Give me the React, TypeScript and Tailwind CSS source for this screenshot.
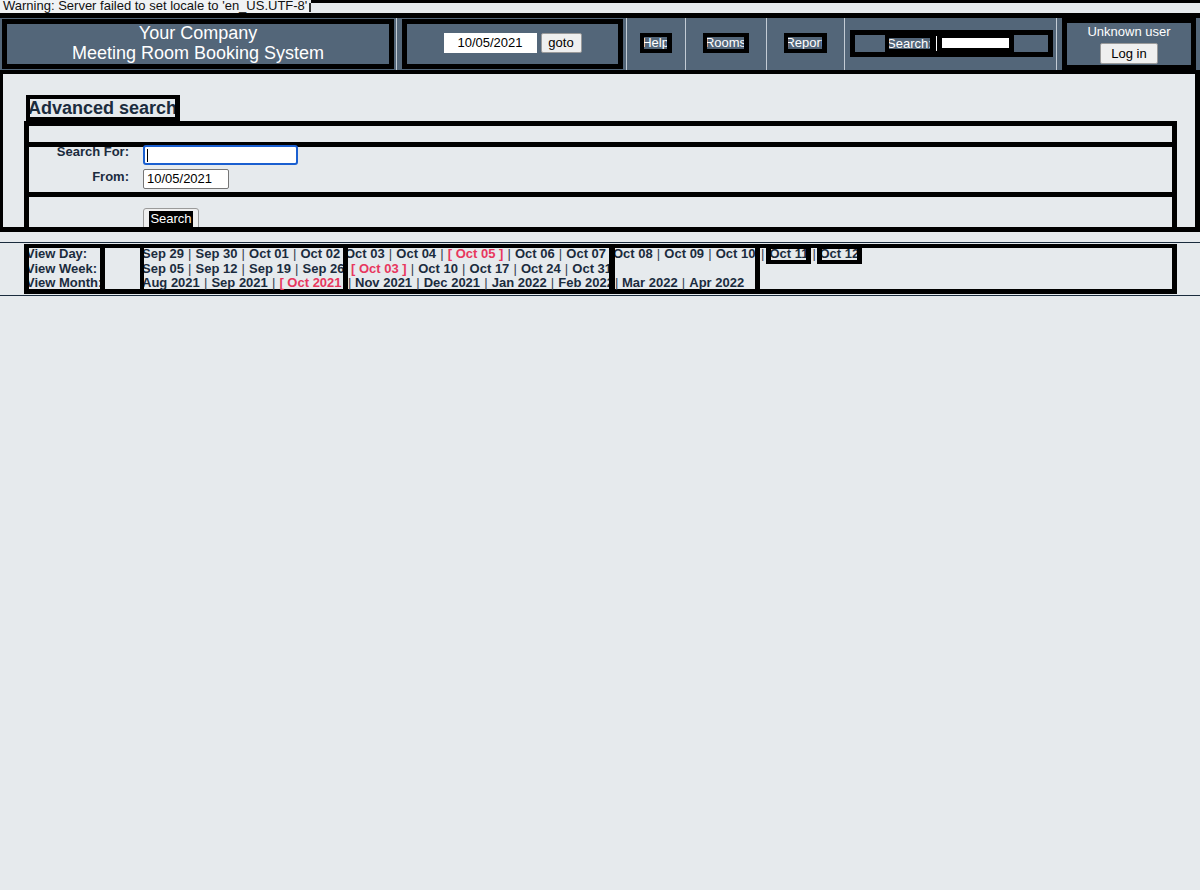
import React from "react";

// parts of a date row; entries in [ ] are the current period
function NavLine({ items, lead = false, className = "" }: { items: string[]; lead?: boolean; className?: string }) {
  return (
    <div className={`h-[14.5px] whitespace-nowrap leading-[14.5px] ${className}`}>
      {lead && <span className="font-normal text-[#34414f]"> | </span>}
      {items.map((it, i) => (
        <React.Fragment key={i}>
          {i > 0 && <span className="px-[0.5px] font-normal text-[#34414f]"> | </span>}
          <span className={it.startsWith("[") ? "text-[#e8375e]" : ""}>{it}</span>
        </React.Fragment>
      ))}
    </div>
  );
}

function HeaderLink({ label, cell, clip }: { label: string; cell: string; clip: string }) {
  return (
    <div className={`flex shrink-0 items-center justify-center border-r border-[#c3ccd5] pb-[3px] ${cell}`}>
      <span className="flex h-[20px] items-center bg-black pl-[4px] pr-[5px]">
        <span className={`flex h-[12px] items-center justify-center overflow-hidden whitespace-nowrap bg-[#536679] text-[13px] leading-[15px] text-white ${clip}`}>
          <span>{label}</span>
        </span>
      </span>
    </div>
  );
}

function DayBox({ label }: { label: string }) {
  return (
    <span className="-mt-[3px] flex h-[20px] w-[45px] shrink-0 items-start border-[5px] border-black bg-black">
      <span className="flex h-[11px] w-full items-center justify-center overflow-hidden whitespace-nowrap bg-[#e6eaed]">
        <span>{label}</span>
      </span>
    </span>
  );
}

export default function App() {
  return (
    <div className="min-h-[890px] bg-[#e6eaed] font-['Liberation_Sans',Arial,sans-serif] text-[#1b2c3e]">
      {/* warning strip */}
      <div className="flex h-[13px]">
        <span className="h-[13px] overflow-hidden whitespace-nowrap bg-[#f0f2f4] pl-[3px] pr-[2px] text-[13px] leading-[12px] text-[#111]">
          Warning: Server failed to set locale to 'en_US.UTF-8'
        </span>
        <span className="mt-[3px] h-[9px] w-[2px] bg-[#333]" />
        <div className="flex-1 border-t-[3px] border-black" />
      </div>

      {/* header */}
      <header className="flex h-[61px] border-t-[5px] border-b-4 border-black bg-[#536679] text-white">
        <div className="w-[397px] shrink-0 border-r border-[#c3ccd5] px-[2px] py-[1px]">
          <div className="flex h-full flex-col items-center justify-center border-[5px] border-black pb-[3px] text-[18px] leading-[20px]">
            <span>Your Company</span>
            <span>Meeting Room Booking System</span>
          </div>
        </div>

        <div className="w-[230px] shrink-0 border-r border-[#c3ccd5] py-[1px] pl-[5px] pr-[3px]">
          <div className="flex h-full items-center justify-center gap-[4px] border-[5px] border-black pb-[2px] text-[13px] text-black">
            <span className="flex h-[20px] w-[93px] items-center justify-center bg-white">10/05/2021</span>
            <span className="flex h-[20px] w-[41px] items-center justify-center rounded-[2px] border border-[#9a9a9a] bg-[#efefef]">goto</span>
          </div>
        </div>

        <HeaderLink label="Help" cell="w-[59px]" clip="w-[23px]" />
        <HeaderLink label="Rooms" cell="w-[81px]" clip="w-[37px]" />
        <HeaderLink label="Report" cell="w-[78px]" clip="w-[34px]" />

        <div className="flex w-[212px] shrink-0 items-center border-r border-[#c3ccd5] pb-[2px] pl-[5px] pr-[3px]">
          <div className="flex h-[27px] w-full items-center border-[5px] border-black bg-black">
            <span className="h-full w-[30px] bg-[#536679]" />
            <span className="ml-[4px] flex h-[11px] w-[41px] items-center justify-center overflow-hidden whitespace-nowrap bg-[#536679] text-[13px] leading-[15px] text-white">
              <span>Search:</span>
            </span>
            <span className="ml-[6px] h-[15px] w-[1px] bg-white" />
            <span className="ml-[5px] h-[10px] w-[67px] bg-white" />
            <span className="ml-[5px] h-full flex-1 bg-[#536679]" />
          </div>
        </div>

        <div className="flex-1 pl-[5px] pr-[4px]">
          <div className="flex h-full flex-col items-center overflow-hidden border-[5px] border-black pt-[1px] text-[13px]">
            <span className="leading-[16px]">Unknown user</span>
            <span className="mt-[3px] flex h-[21px] w-[58px] shrink-0 items-center justify-center rounded-[2px] border border-[#9a9a9a] bg-[#efefef] text-black">
              Log in
            </span>
          </div>
        </div>
      </header>

      {/* advanced search */}
      <main className="h-[158px] overflow-hidden border-b-[5px] border-l-[3px] border-r-[5px] border-black pl-[21px] pr-[18px] pt-[21px]">
        <div className="ml-[2px] inline-flex border-[4px] border-r-[5px] border-black align-top">
          <span className="flex h-[18px] w-[145px] items-center justify-center overflow-hidden whitespace-nowrap bg-[#e6eaed] text-[18px] font-bold leading-[20px]">
            <span>Advanced search</span>
          </span>
        </div>
        <div className="border-[5px] border-black">
          <div className="h-[16px]" />
          <div className="h-[50px] border-t-[5px] border-black">
            <div className="-mt-[2px] flex h-[20px] items-start">
              <span className="-mt-[1px] w-[100px] text-right text-[13px] font-bold leading-[15px]">Search For:</span>
              <span className="ml-[14px] flex h-[20px] w-[155px] items-center rounded-[3px] border-2 border-[#1a5fd0] bg-white pl-[2px]">
                <span className="h-[13px] w-[1px] bg-black" />
              </span>
            </div>
            <div className="mt-[4px] flex h-[20px] items-start">
              <span className="w-[100px] text-right text-[13px] font-bold leading-[15px]">From:</span>
              <span className="ml-[14px] flex h-[20px] w-[86px] items-center rounded-[2px] border border-[#767676] bg-white pl-[3px] text-[13px] text-black">
                10/05/2021
              </span>
            </div>
          </div>
          <div className="flex h-[45px] items-start border-t-[5px] border-black pl-[114px] pt-[11px]">
            <span className="flex h-[24px] w-[56px] items-start justify-center rounded-[3px] border border-[#9a9a9a] bg-[#efefef] pt-[2px]">
              <span className="bg-black px-[1px] text-[13px] leading-[16px] text-white">Search</span>
            </span>
          </div>
        </div>
      </main>

      {/* calendar navigation */}
      <nav className="mt-[10px] border-y border-[#1b2c3e] py-[1px]">
        <div className="ml-[24px] h-[50px] w-[1153px] border-x-[5px] border-b-[5px] border-t-4 border-black">
          <div className="flex h-full text-[13px] font-bold">
            <div className="w-[71px] shrink-0 overflow-x-clip">
              <div className="-ml-[3px] -mt-[1px]">
                <NavLine items={["View Day:"]} />
                <NavLine items={["View Week:"]} />
                <NavLine items={["View Month:"]} />
              </div>
            </div>
            <div className="w-[40px] shrink-0 border-l-[5px] border-black" />
            <div className="w-[203px] shrink-0 overflow-x-clip border-l-[4px] border-black">
              <div className="-ml-[2px] -mt-[1px]">
                <NavLine items={["Sep 29", "Sep 30", "Oct 01", "Oct 02"]} />
                <NavLine items={["Sep 05", "Sep 12", "Sep 19", "Sep 26"]} />
                <NavLine items={["Aug 2021", "Sep 2021", "[ Oct 2021 ]"]} />
              </div>
            </div>
            <div className="w-[266px] shrink-0 overflow-x-clip border-l-[5px] border-black">
              <div className="-mt-[1px]">
                <NavLine className="-ml-[3px]" items={["Oct 03", "Oct 04", "[ Oct 05 ]", "Oct 06", "Oct 07"]} />
                <NavLine className="pl-[3px]" items={["[ Oct 03 ]", "Oct 10", "Oct 17", "Oct 24", "Oct 31"]} />
                <NavLine lead items={["Nov 2021", "Dec 2021", "Jan 2022", "Feb 2022"]} />
              </div>
            </div>
            <div className="w-[146px] shrink-0 overflow-x-clip border-l-[6px] border-black">
              <div className="-mt-[1px]">
                <NavLine className="-ml-[2px]" items={["Oct 08", "Oct 09", "Oct 10"]} />
                <NavLine items={[]} />
                <NavLine lead items={["Mar 2022", "Apr 2022"]} />
              </div>
            </div>
            <div className="flex-1 overflow-x-clip border-l-[5px] border-black">
              <div className="-mt-[1px] flex h-[14.5px] items-start whitespace-nowrap pl-[1px] leading-[14.5px]">
                <span className="font-normal text-[#34414f]">|</span>
                <span className="ml-[2px] flex">
                  <DayBox label="Oct 11" />
                </span>
                <span className="mx-[1px] font-normal text-[#34414f]">|</span>
                <DayBox label="Oct 12" />
              </div>
            </div>
          </div>
        </div>
      </nav>
    </div>
  );
}
